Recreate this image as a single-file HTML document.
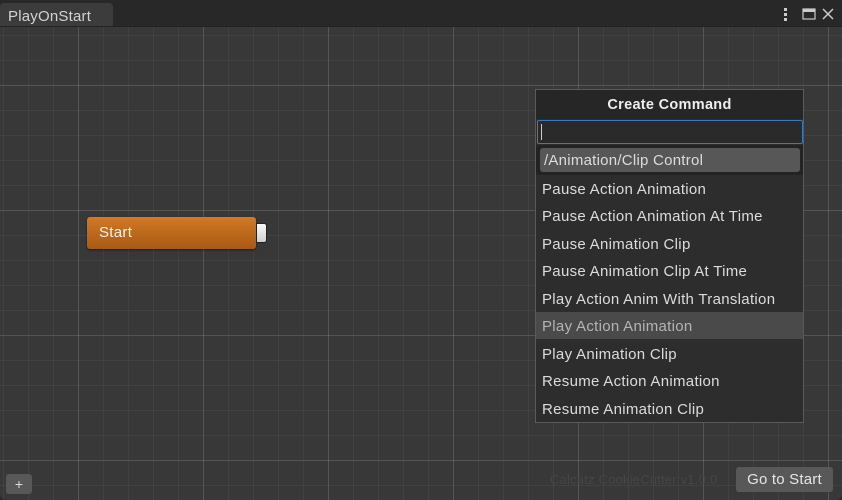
<!DOCTYPE html>
<html><head><style>
*{margin:0;padding:0;box-sizing:border-box}
body{width:842px;height:500px;background:#282828;font-family:"Liberation Sans",sans-serif;position:relative;overflow:hidden}
.tab{position:absolute;left:0;top:3px;width:113px;height:23px;background:#3c3c3c;border-radius:4px 4px 0 0;color:#d2d2d2;font-size:15px;letter-spacing:0.2px;padding:5px 0 0 8px}
.canvas{position:absolute;left:0;top:26px;width:842px;height:474px;background-color:#383838;border-radius:0 0 6px 6px;
background-image:
linear-gradient(to right,rgba(255,255,255,.10) 1px,transparent 1px),
linear-gradient(to bottom,rgba(255,255,255,.10) 1px,transparent 1px),
linear-gradient(to right,rgba(255,255,255,.045) 1px,transparent 1px),
linear-gradient(to bottom,rgba(255,255,255,.045) 1px,transparent 1px);
background-size:125px 125px,125px 125px,25px 25px,25px 25px;
background-position:78px 58px,78px 58px,3px 8px,3px 8px;border-top:1px solid #232323}
.node{position:absolute;left:87px;top:217px;width:169px;height:32px;border-radius:3px;background:linear-gradient(#d17a26,#a95a14);color:#f2f2f2;font-size:15px;letter-spacing:0.3px;padding:7px 0 0 12px;box-shadow:0 1px 2px rgba(0,0,0,.5)}
.port{position:absolute;left:256px;top:223px;width:11px;height:20px;background:linear-gradient(#fafafa,#cfcfcf);border-radius:0 3px 3px 0;border:1px solid #222}
.pop{position:absolute;left:535px;top:89px;width:269px;height:334px;background:#2d2d2d;border:1px solid #5a5a5a}
.hd{height:29px;background:#262626;color:#eee;font-weight:bold;font-size:14.5px;letter-spacing:0.3px;text-align:center;padding-top:7px}
.search{position:absolute;left:1px;top:30px;width:266px;height:24px;border:1px solid #3a79bb;background:#2a2a2a;border-radius:2px}
.search:after{content:"";position:absolute;left:3px;top:3px;width:1px;height:16px;background:#ccc}
.cat{position:absolute;left:4px;top:58px;width:260px;height:24px;background:#575757;border-radius:3px;color:#dcdcdc;font-size:15px;letter-spacing:0.25px;padding:4px 0 0 4px}
.catbg{position:absolute;left:0;top:55px;width:267px;height:30px;background:#232323}
.it{position:absolute;left:0;width:267px;height:27px;color:#dcdcdc;font-size:15px;letter-spacing:0.3px;padding:6px 0 0 6px}
.it.h{background:#4a4a4a;color:#b4b4b4}
.ver{position:absolute;left:550px;top:472px;color:#464646;font-size:13px;letter-spacing:0.2px}
.btn{position:absolute;left:736px;top:467px;width:97px;height:25px;background:#585858;border-radius:3px;color:#e6e6e6;font-size:15px;letter-spacing:0.2px;text-align:center;padding-top:4px}
.plus{position:absolute;left:6px;top:474px;width:26px;height:20px;background:#585858;border-radius:3px;color:#ddd;font-size:14px;text-align:center;line-height:20px}
</style></head><body>
<div class="tab">PlayOnStart</div>
<svg style="position:absolute;left:780px;top:6px" width="56" height="16">
<rect x="4" y="2" width="3" height="3" fill="#ccc"/><rect x="4" y="7" width="3" height="3" fill="#ccc"/><rect x="4" y="12" width="3" height="3" fill="#ccc"/>
<rect x="23" y="3" width="12" height="10" fill="none" stroke="#ccc" stroke-width="1.2"/><rect x="23" y="3" width="12" height="3" fill="#ccc"/>
<path d="M43 3L53 13M53 3L43 13" stroke="#ccc" stroke-width="1.5"/>
</svg>
<div class="canvas"></div>
<div class="node">Start</div><div class="port"></div>
<div class="pop">
<div class="hd">Create Command</div>
<div class="search"></div>
<div class="catbg"></div>
<div class="cat">/Animation/Clip Control</div>
<div class="it" style="top:85px">Pause Action Animation</div>
<div class="it" style="top:112px">Pause Action Animation At Time</div>
<div class="it" style="top:140px">Pause Animation Clip</div>
<div class="it" style="top:167px">Pause Animation Clip At Time</div>
<div class="it" style="top:195px">Play Action Anim With Translation</div>
<div class="it h" style="top:222px">Play Action Animation</div>
<div class="it" style="top:250px">Play Animation Clip</div>
<div class="it" style="top:277px">Resume Action Animation</div>
<div class="it" style="top:305px">Resume Animation Clip</div>
</div>
<div class="ver">Calcatz CookieCutter v1.0.0</div>
<div class="btn">Go to Start</div>
<div class="plus">+</div>
</body></html>
